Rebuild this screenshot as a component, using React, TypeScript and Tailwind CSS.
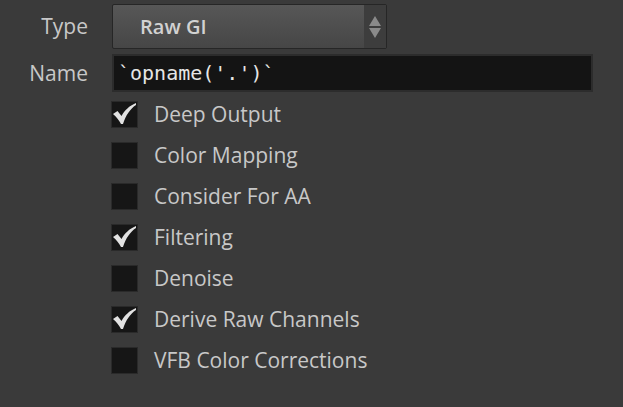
const rows: { label: string; checked: boolean }[] = [
  { label: "Deep Output", checked: true },
  { label: "Color Mapping", checked: false },
  { label: "Consider For AA", checked: false },
  { label: "Filtering", checked: true },
  { label: "Denoise", checked: false },
  { label: "Derive Raw Channels", checked: true },
  { label: "VFB Color Corrections", checked: false },
];

function Check() {
  return (
    <svg width="25" height="25" viewBox="0 0 25 25" className="absolute left-[0px] top-[-1px]">
      <path
        d="M1 13 L5.5 10 L9.5 15 C13 9 17 5 24 2 L24 4 C18 8 14 14 11 23 L9 23 C7 19 4.5 16 1 13 Z"
        fill="#e2e2e2"
      />
    </svg>
  );
}

export default function App() {
  return (
    <div className="w-[623px] h-[407px] bg-[#3a3a3a] text-[#c8c8c8] font-['Open_Sans',sans-serif] overflow-hidden">
      <div className="flex items-center pt-[4px]">
        <div className="w-[88px] text-right text-[21px] leading-none">Type</div>
        <div className="ml-[24px] flex h-[45px] w-[275px] rounded-[2px] border border-[#262626] bg-gradient-to-b from-[#575757] to-[#464646]">
          <div className="flex flex-1 items-center pl-[27px] text-[20px] font-semibold text-[#d2d2d2]">Raw GI</div>
          <div className="flex w-[22px] flex-col items-center justify-center gap-[2px] bg-[#3d3d3d]">
            <svg width="12" height="10" viewBox="0 0 12 10"><path d="M6 0 L12 10 L0 10 Z" fill="#8a8a8a" /></svg>
            <svg width="12" height="10" viewBox="0 0 12 10"><path d="M0 0 L12 0 L6 10 Z" fill="#8a8a8a" /></svg>
          </div>
        </div>
      </div>
      <div className="mt-[5px] flex items-center">
        <div className="w-[88px] text-right text-[21px] leading-none">Name</div>
        <div className="ml-[24px] flex h-[38px] w-[481px] items-center border-2 border-[#2c2c2c] bg-[#141414] pl-[4px] font-['DejaVu_Sans_Mono',monospace] text-[20px] text-[#e6e6e6]">
          `opname('.')`
        </div>
      </div>
      <div className="mt-[9px] flex flex-col gap-[14px] pl-[111px]">
        {rows.map((r) => (
          <div key={r.label} className="flex h-[27px] items-center">
            <div className="relative h-[27px] w-[27px] border border-[#2a2a2a] bg-[#161616]">
              {r.checked && <Check />}
            </div>
            <span className="ml-[16px] text-[21px] leading-none">{r.label}</span>
          </div>
        ))}
      </div>
    </div>
  );
}
